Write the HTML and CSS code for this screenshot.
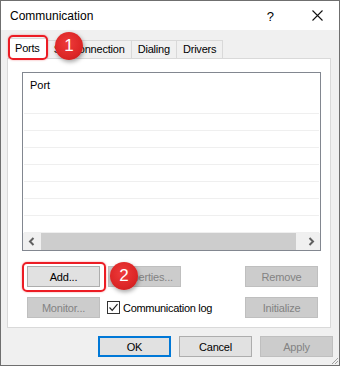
FILE: index.html
```html
<!DOCTYPE html>
<html>
<head>
<meta charset="utf-8">
<link rel="stylesheet" href="styles.css">
</head>
<body>
<div class="window">
  <div class="titlebar">
    <span class="title">Communication</span>
    <span class="help">?</span>
    <svg class="close" width="11" height="11" viewBox="0 0 11 11"><path d="M0.5 0.5 L10.5 10.5 M10.5 0.5 L0.5 10.5" stroke="#111" stroke-width="1.1" fill="none"/></svg>
  </div>
  <div class="body">
    <div class="tabs">
      <div class="tab selected">Ports</div>
      <div class="tab">SIP connection</div>
      <div class="tab">Dialing</div>
      <div class="tab last">Drivers</div>
    </div>
    <div class="panel">
      <div class="list">
        <div class="list-head">Port</div>
        <div class="row"></div><div class="row"></div><div class="row"></div><div class="row"></div>
        <div class="row"></div><div class="row"></div><div class="row"></div><div class="row"></div>
        <div class="hscroll">
          <div class="arrow"><svg width="7" height="9" viewBox="0 0 7 9"><path d="M5.5 1 L2 4.5 L5.5 8" stroke="#606060" stroke-width="2" fill="none"/></svg></div>
          <div class="thumb"></div>
          <div class="track"></div>
          <div class="arrow"><svg width="7" height="9" viewBox="0 0 7 9"><path d="M1.5 1 L5 4.5 L1.5 8" stroke="#606060" stroke-width="2" fill="none"/></svg></div>
        </div>
      </div>
      <div class="actions">
        <button class="btn">Add...</button>
        <button class="btn disabled">Properties...</button>
        <span></span>
        <button class="btn disabled">Remove</button>
        <button class="btn disabled">Monitor...</button>
        <label class="check">
          <span class="box"><svg width="11" height="11" viewBox="0 0 11 11"><path d="M1.5 5.5 L4.2 8.3 L9.5 2.2" stroke="#222" stroke-width="1.2" fill="none"/></svg></span>
          <span>Communication log</span>
        </label>
        <button class="btn disabled">Initialize</button>
      </div>
    </div>
    <div class="footer">
      <button class="btn default">OK</button>
      <button class="btn">Cancel</button>
      <button class="btn disabled">Apply</button>
    </div>
  </div>
  <svg class="grip" width="8" height="8" viewBox="0 0 8 8"><path d="M7 1 L1 7 M7 4 L4 7 M7 7 L7 7" stroke="#a0a0a0" stroke-width="1" fill="none"/></svg>
  <div class="mark mark-tab"></div>
  <div class="badge badge-1">1</div>
  <div class="mark mark-add"></div>
  <div class="badge badge-2">2</div>
</div>
</body>
</html>
```
FILE: styles.css
```css
* { box-sizing: border-box; }
html, body { margin: 0; padding: 0; background: #fff; }
body { font-family: "Liberation Sans", Arial, sans-serif; font-size: 11px; color: #000; }

.window {
  position: relative;
  width: 340px;
  height: 366px;
  border: 1px solid #6f6f6f;
  background: #f0f0f0;
  overflow: hidden;
}

.titlebar {
  height: 29px;
  background: #fff;
  display: flex;
  align-items: center;
  padding-left: 9px;
}
.title { font-size: 12px; flex: 1; padding-top: 1px; }
.help { font-size: 13px; margin-right: 38px; padding-top: 1px; }
.close { margin-right: 16px; }

.body { padding: 8px 7px 0 6px; }

.tabs {
  display: flex;
  align-items: flex-end;
  height: 20px;
  padding-left: 1px;
  position: relative;
  z-index: 2;
}
.tab {
  height: 18px;
  padding: 0 6px 0 6px;
  border: 1px solid #d9d9d9;
  border-right: none;
  border-bottom: none;
  background: #f0f0f0;
  line-height: 16px;
  letter-spacing: -0.2px;
}
.tab.last { border-right: 1px solid #d9d9d9; }
.tab.selected {
  height: 21px;
  margin-bottom: -1px;
  background: #fff;
  border-right: 1px solid #d9d9d9;
  padding: 0 7px 0 6px;
  line-height: 18px;
  margin-right: -1px;
}

.panel {
  width: 324px;
  height: 270px;
  border: 1px solid #d9d9d9;
  background: #fff;
  padding: 13px 0 0 14px;
}

.list {
  width: 299px;
  height: 179px;
  border: 1px solid #828790;
  display: flex;
  flex-direction: column;
}
.list-head {
  height: 24px;
  padding-left: 7px;
  line-height: 24px;
}
.row {
  height: 17px;
  margin: 0 1px;
  border-bottom: 1px solid #efefef;
}
.hscroll {
  height: 17px;
  display: flex;
  background: #f0f0f0;
}
.arrow {
  width: 17px;
  display: flex;
  align-items: center;
  justify-content: center;
}
.thumb { width: 255px; margin-left: 1px; background: #cdcdcd; }
.track { flex: 1; }

.actions {
  width: 291px;
  margin: 15px 0 0 5px;
  display: grid;
  grid-template-columns: 73px 73px 1fr 73px;
  column-gap: 8px;
  row-gap: 10px;
}

.btn {
  height: 21px;
  width: 73px;
  font-family: "Liberation Sans", Arial, sans-serif;
  font-size: 11px;
  letter-spacing: -0.2px;
  color: #000;
  background: #e1e1e1;
  border: 1px solid #adadad;
  padding: 0;
  margin: 0;
}
.btn.disabled {
  color: #838383;
  background: #cccccc;
  border-color: #bfbfbf;
}
.btn.default { border: 2px solid #0078d7; }

.check {
  grid-column: 2 / 4;
  display: flex;
  align-items: center;
  gap: 3px;
  margin-left: -1px;
  letter-spacing: -0.3px;
}
.box {
  width: 13px;
  height: 13px;
  border: 1px solid #333;
  background: #fff;
  display: flex;
  align-items: center;
  justify-content: center;
}

.footer {
  display: flex;
  justify-content: flex-end;
  gap: 8px;
  margin-top: 8px;
  margin-right: -1px;
}

.grip { position: absolute; right: 0; bottom: 0; }

.mark {
  position: absolute;
  border: 2px solid #ec1c24;
  border-radius: 5px;
  box-shadow: 0 0 2px rgba(236, 28, 36, 0.5);
  z-index: 5;
}
.mark-tab { left: 7px; top: 34px; width: 40px; height: 25px; }
.mark-add { left: 21px; top: 261px; width: 84px; height: 30px; }

.badge {
  position: absolute;
  width: 28px;
  height: 28px;
  border-radius: 50%;
  background: radial-gradient(circle at 45% 40%, #ee3b3b 0%, #dc2626 60%, #c01a1a 100%);
  color: #fff;
  font-family: "Liberation Sans", Arial, sans-serif;
  font-size: 17px;
  line-height: 28px;
  text-align: center;
  box-shadow: 1px 2px 4px rgba(0, 0, 0, 0.35);
  z-index: 6;
}
.badge-1 { left: 54px; top: 31px; }
.badge-2 { left: 109px; top: 261px; }
```
